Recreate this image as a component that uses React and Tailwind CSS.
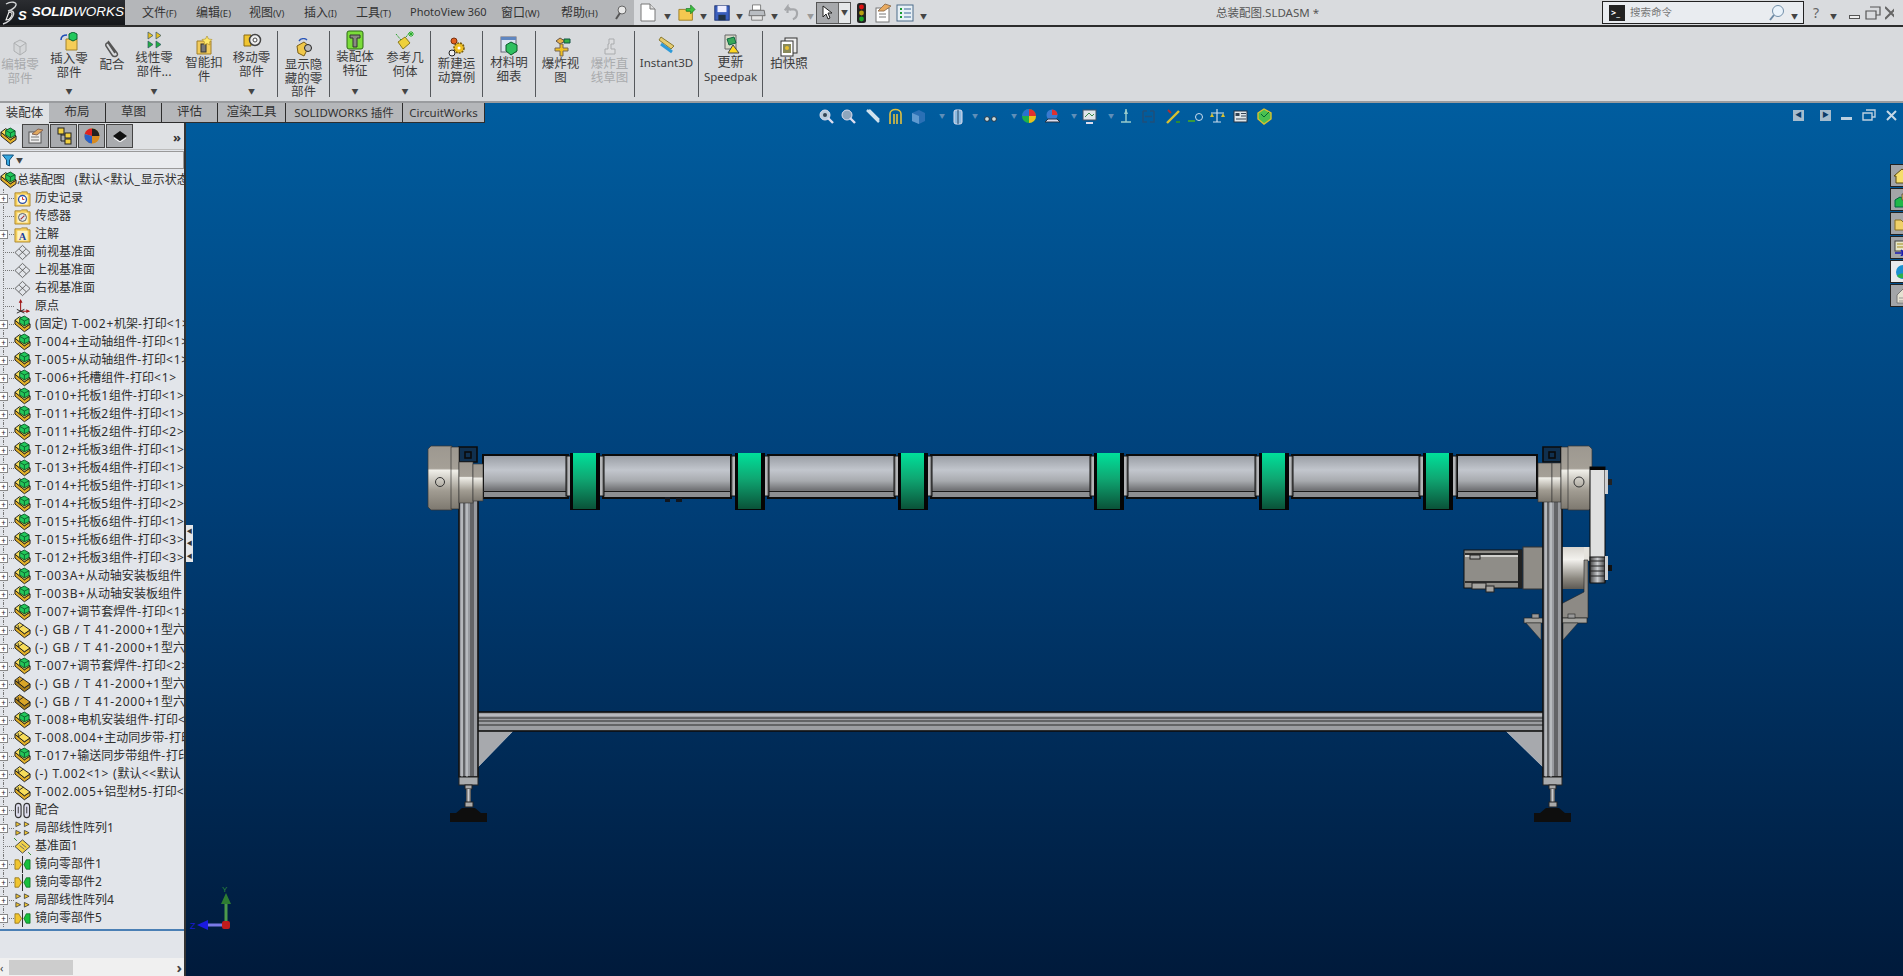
import React from 'react';

const font = "font-[family-name:'Noto_Sans','Noto_Sans_CJK_SC',sans-serif]";

// petits icones dessines a la main (18x18)
function PartIcon({ tone = 'asm' }) {
  const face = tone === 'dark' ? '#d9a528' : '#f6dc5a';
  const side = tone === 'dark' ? '#a97f1c' : '#e2b02a';
  return (
    <svg width="17" height="18" viewBox="0 0 18 18" className="shrink-0">
      <path d="M1 5 V9 L11 17.2 L17 13 V9 L11 13 Z" fill={side} stroke="#1d1d1d" strokeWidth="1" />
      <path d="M1 5 L6 1.2 L17 9 L11 13 Z" fill={face} stroke="#1d1d1d" strokeWidth="1" />
      {tone !== 'asm' && <path d="M4.5 7.8 L10 3.8 M4.5 7.8 V4" stroke="#1d1d1d" strokeWidth="0.9" fill="none" />}
      {tone === 'asm' && <path d="M6 3 L11 0.6 L16 3.6 V8.4 L11 11 L6 8 Z" fill="#22c85a" stroke="#084a24" strokeWidth="0.9" />}
      {tone === 'asm' && <path d="M6 3 L11 5.8 L16 3.6 M11 5.8 V11" fill="none" stroke="#084a24" strokeWidth="0.8" />}
    </svg>
  );
}

function TreeIcon({ type }) {
  if (type === 'asm') return <PartIcon tone="asm" />;
  if (type === 'part') return <PartIcon tone="part" />;
  if (type === 'dark') return <PartIcon tone="dark" />;
  const s = { width: 17, height: 17, viewBox: '0 0 18 18', className: 'shrink-0' };
  if (type === 'history' || type === 'sensor' || type === 'note')
    return (
      <svg {...s}>
        <path d="M1 3 H7 L8 2 H14 V4 H17 V17 H1 Z" fill="#f6cf5b" stroke="#a5812b" strokeWidth="0.9" />
        <rect x="3.5" y="5" width="11" height="10.5" fill="#fdf2c4" />
        {type === 'history' && <circle cx="9" cy="10" r="4.2" fill="#fff" stroke="#2b4ea8" strokeWidth="1.4" />}
        {type === 'history' && <path d="M9 7.5 V10 H11" stroke="#c22" fill="none" />}
        {type === 'sensor' && <circle cx="9" cy="10" r="4.2" fill="#dfe6ee" stroke="#555" strokeWidth="1" />}
        {type === 'sensor' && <path d="M7 12 L11 8" stroke="#a33" strokeWidth="1.2" />}
        {type === 'note' && <text x="5" y="14.5" fontSize="11" fontWeight="700" fill="#1c3fa0" fontFamily="Liberation Serif">A</text>}
      </svg>
    );
  if (type === 'plane')
    return (
      <svg {...s}>
        <path d="M9 1.5 L17 9 L9 16.5 L1 9 Z M5.5 5.5 L13 12.5 M12.5 5.5 L5 12.5" fill="none" stroke="#444" strokeWidth="0.8" />
      </svg>
    );
  if (type === 'plane1')
    return (
      <svg {...s}>
        <path d="M9 2 L17 9 L9 16 L1 9 Z" fill="#f3d34a" stroke="#333" strokeWidth="0.9" />
        <path d="M6 8 L11 12 M8 6 L13 10" stroke="#666" />
        <path d="M0 0 L3 3 M15 15 L18 18" stroke="#2a8a2a" />
      </svg>
    );
  if (type === 'origin')
    return (
      <svg {...s}>
        <path d="M7 14 V3 M7 14 H16" stroke="#a01818" strokeWidth="1.1" fill="none" />
        <path d="M7 1 L5 5 H9 Z M17 14 L13 12 V16 Z" fill="#a01818" />
        <path d="M3 12 L11 16 M3 16 L11 12" stroke="#222" />
      </svg>
    );
  if (type === 'mate')
    return (
      <svg {...s}>
        <rect x="1.5" y="1.5" width="6" height="15" rx="3" fill="#dde" stroke="#333" strokeWidth="1.2" />
        <rect x="10.5" y="1.5" width="6" height="15" rx="3" fill="#dde" stroke="#333" strokeWidth="1.2" />
        <path d="M4.5 5 V12 M13.5 5 V12" stroke="#333" />
      </svg>
    );
  if (type === 'pattern')
    return (
      <svg {...s}>
        {[[2, 2], [11, 2], [2, 11], [11, 11]].map(([x, y]) => (
          <path key={`${x}-${y}`} d={`M${x} ${y} L${x + 5} ${y + 2.5} L${x} ${y + 5} Z`} fill="#f0c530" stroke="#333" strokeWidth="0.8" />
        ))}
      </svg>
    );
  return (
    <svg {...s}>
      <path d="M1 4 H5 L8 9 L5 14 H1 Z" fill="#f0c530" stroke="#8a6a10" strokeWidth="0.8" />
      <path d="M9 0 V18" stroke="#222" strokeWidth="1" />
      <path d="M17 4 H13 L10.5 9 L13 14 H17 Z" fill="#18c03c" stroke="#0a6a20" strokeWidth="0.8" />
    </svg>
  );
}

function RibbonIcon({ name }) {
  const s = { width: 20, height: 20, viewBox: '0 0 20 20' };
  switch (name) {
    case 'edit':
      return (
        <svg {...s}>
          <path d="M4 5 L10 2 L16 5 L16 13 L10 17 L4 13 Z M4 5 L10 9 L16 5 M10 9 V17" fill="#d4d6d8" stroke="#aeb0b2" />
        </svg>
      );
    case 'insert':
      return (
        <svg {...s}>
          <path d="M7 7 H18 V18 H7 Z" fill="#f5cd58" stroke="#a2822c" />
          <path d="M10 2 L14 0 L18 2 V7 L14 9 L10 7 Z" fill="#22c85c" stroke="#0a6030" />
          <path d="M2 8 C2 4 5 3 8 3" fill="none" stroke="#1f4db5" strokeWidth="1.6" />
        </svg>
      );
    case 'mate':
      return (
        <svg {...s}>
          <path d="M6 3 L15 15 C17 18 12 20 10 17 L4 8 C3 5 6 4 7 6 L13 15" fill="none" stroke="#555" strokeWidth="1.5" />
        </svg>
      );
    case 'linear':
      return (
        <svg {...s}>
          {[[4, 1], [12, 1], [4, 10], [12, 10]].map(([x, y], i) => (
            <path key={i} d={`M${x} ${y} L${x + 5} ${y + 3.5} L${x} ${y + 7} Z`} fill={i < 2 ? '#e8c020' : '#20b040'} stroke="#356" strokeWidth="0.7" />
          ))}
        </svg>
      );
    case 'smart':
      return (
        <svg {...s}>
          <path d="M3 5 H17 V18 H3 Z" fill="#f2cc5c" stroke="#a07e2a" />
          <rect x="7" y="8" width="5" height="8" fill="#777" stroke="#333" />
          <path d="M13 0 L14.5 3 L18 3.5 L15.5 6 L16 9 L13 7.5 L10 9 L10.5 6 L8 3.5 L11.5 3 Z" fill="#ffe96a" stroke="#a98a20" strokeWidth="0.6" />
        </svg>
      );
    case 'move':
      return (
        <svg {...s}>
          <path d="M2 4 H9 V15 H2 Z" fill="#f0c530" stroke="#8a6a10" />
          <circle cx="13" cy="9" r="5.5" fill="#eee" stroke="#444" strokeWidth="1.5" />
          <circle cx="13" cy="9" r="2" fill="#fff" stroke="#444" />
        </svg>
      );
    case 'show':
      return (
        <svg {...s}>
          <path d="M3 8 L10 4 L15 8 L10 18 L4 15 Z" fill="#f0c84a" stroke="#7a5e18" />
          <circle cx="14" cy="10" r="3.5" fill="#bbb" stroke="#222" />
          <path d="M5 3 C7 0 11 0 13 2" stroke="#2a56b8" strokeWidth="1.4" fill="none" />
        </svg>
      );
    case 'feature':
      return (
        <svg {...s}>
          <rect x="2" y="1" width="16" height="18" rx="2" fill="#7bdc3a" stroke="#2c6a14" />
          <path d="M5 5 H15 V8 H12 V17 H8 V8 H5 Z" fill="#8a8a82" stroke="#333" />
        </svg>
      );
    case 'geometry':
      return (
        <svg {...s}>
          <path d="M3 11 L10 6 L15 12 L8 18 Z" fill="#eed13a" stroke="#8a7a20" />
          <path d="M1 3 L6 9 M11 6 L15 1" stroke="#2aa02a" strokeDasharray="2 1" />
          <path d="M16 0 V6 M13 3 H19 M14 1 L18 5 M18 1 L14 5" stroke="#28b028" />
        </svg>
      );
    case 'motion':
      return (
        <svg {...s}>
          <circle cx="12" cy="11" r="5" fill="#f0c020" stroke="#7a5e10" strokeDasharray="2 1" strokeWidth="1.6" />
          <circle cx="12" cy="11" r="1.5" fill="#fff" />
          <circle cx="5" cy="16" r="3" fill="#eee" stroke="#222" />
          <circle cx="7" cy="4" r="3" fill="#e06020" stroke="#7a3010" />
        </svg>
      );
    case 'bom':
      return (
        <svg {...s}>
          <rect x="2" y="1" width="15" height="15" fill="#dce4f0" stroke="#667" />
          <rect x="2" y="1" width="15" height="3" fill="#5f86c0" />
          <path d="M7 9 L12 6 L18 9 V15 L12 19 L7 15 Z" fill="#30c060" stroke="#0a5a28" />
        </svg>
      );
    case 'explode':
      return (
        <svg {...s}>
          <path d="M9 1 L14 4 L9 7 L5 4 Z" fill="#e8b048" stroke="#654" />
          <path d="M13 2 H19 V6 H13 Z" fill="#35b045" stroke="#154" />
          <path d="M4 11 H9 V7 H12 V11 H17 V14 H12 V19 H9 V14 H4 Z" fill="#f0c020" stroke="#765" />
        </svg>
      );
    case 'line':
      return (
        <svg {...s}>
          <path d="M9 2 H14 V7 H11 V12 H15 V17 H5 V12 H8 V7 H9 Z" fill="#dcdddf" stroke="#a9abad" />
        </svg>
      );
    case 'instant':
      return (
        <svg {...s}>
          <path d="M4 2 L17 11 L14 14 L2 5 Z" fill="#e6cc70" stroke="#8a7a30" />
          <path d="M4 9 L15 17" stroke="#2d9ad8" strokeWidth="3" />
        </svg>
      );
    case 'speedpak':
      return (
        <svg {...s}>
          <path d="M4 1 H15 V15 H4 Z" fill="#d8d8c8" stroke="#666" />
          <path d="M6 5 L13 3 L15 9 L8 11 Z" fill="#38a858" stroke="#164" />
          <path d="M12 11 L18 19 H7 Z" fill="#ffd820" stroke="#444" />
        </svg>
      );
    default:
      return (
        <svg {...s}>
          <rect x="6" y="1" width="12" height="15" fill="#eee" stroke="#333" />
          <rect x="2" y="4" width="12" height="15" fill="#fff" stroke="#333" />
          <rect x="4" y="7" width="8" height="9" fill="#8a8a5a" />
          <circle cx="8" cy="11" r="2" fill="#e8c030" />
        </svg>
      );
  }
}

const ribbon = [
  { w: 40, lines: ['编辑零', '部件'], icon: 'edit', off: true, pt: 'pt-[11px]' },
  { w: 58, lines: ['插入零', '部件'], icon: 'insert', caret: true, pt: 'pt-[5px]' },
  { w: 28, lines: ['配合'], icon: 'mate', pt: 'pt-[11px]' },
  { w: 56, lines: ['线性零', '部件...'], icon: 'linear', caret: true, pt: 'pt-[4px]' },
  { w: 44, lines: ['智能扣', '件'], icon: 'smart', pt: 'pt-[9px]' },
  { w: 51, lines: ['移动零', '部件'], icon: 'move', caret: true, pt: 'pt-[4px]' },
  'sep',
  { w: 51, lines: ['显示隐', '藏的零', '部件'], icon: 'show', pt: 'pt-[11px]' },
  'sep',
  { w: 50, lines: ['装配体', '特征'], icon: 'feature', caret: true, pt: 'pt-[3px]' },
  { w: 50, lines: ['参考几', '何体'], icon: 'geometry', caret: true, pt: 'pt-[4px]' },
  'sep',
  { w: 51, lines: ['新建运', '动算例'], icon: 'motion', pt: 'pt-[10px]' },
  'sep',
  { w: 52, lines: ['材料明', '细表'], icon: 'bom', pt: 'pt-[9px]' },
  'sep',
  { w: 49, lines: ['爆炸视', '图'], icon: 'explode', pt: 'pt-[10px]' },
  { w: 49, lines: ['爆炸直', '线草图'], icon: 'line', off: true, pt: 'pt-[10px]' },
  'sep',
  { w: 63, lines: ['Instant3D'], icon: 'instant', pt: 'pt-[8px]' },
  'sep',
  { w: 63, lines: ['更新', 'Speedpak'], icon: 'speedpak', pt: 'pt-[7px]' },
  'sep',
  { w: 52, lines: ['拍快照'], icon: 'snap', pt: 'pt-[10px]' },
];

const widthClass = {
  28: 'w-[28px]',
  40: 'w-[40px]',
  44: 'w-[44px]',
  49: 'w-[49px]',
  50: 'w-[50px]',
  51: 'w-[51px]',
  52: 'w-[52px]',
  56: 'w-[56px]',
  58: 'w-[58px]',
  63: 'w-[63px]',
};

const menus = [
  ['文件', '(F)', 'w-[54px]'],
  ['编辑', '(E)', 'w-[53px]'],
  ['视图', '(V)', 'w-[55px]'],
  ['插入', '(I)', 'w-[52px]'],
  ['工具', '(T)', 'w-[53px]'],
];

const tabs = [
  ['装配体', 'w-[49px]'],
  ['布局', 'w-[57px]'],
  ['草图', 'w-[56px]'],
  ['评估', 'w-[56px]'],
  ['渲染工具', 'w-[68px]'],
  ['SOLIDWORKS 插件', 'w-[117px]'],
  ['CircuitWorks', 'w-[82px]'],
];

const gb = '(-) GB / T 41-2000+1型六角头螺栓';
const tree = [
  ['history', '历史记录', 1],
  ['sensor', '传感器', 0],
  ['note', '注解', 1],
  ['plane', '前视基准面', 0],
  ['plane', '上视基准面', 0],
  ['plane', '右视基准面', 0],
  ['origin', '原点', 0],
  ['asm', '(固定) T-002+机架-打印<1>', 1],
  ['asm', 'T-004+主动轴组件-打印<1>', 1],
  ['asm', 'T-005+从动轴组件-打印<1>', 1],
  ['asm', 'T-006+托槽组件-打印<1>', 1],
  ['asm', 'T-010+托板1组件-打印<1>', 1],
  ['asm', 'T-011+托板2组件-打印<1>', 1],
  ['asm', 'T-011+托板2组件-打印<2>', 1],
  ['asm', 'T-012+托板3组件-打印<1>', 1],
  ['asm', 'T-013+托板4组件-打印<1>', 1],
  ['asm', 'T-014+托板5组件-打印<1>', 1],
  ['asm', 'T-014+托板5组件-打印<2>', 1],
  ['asm', 'T-015+托板6组件-打印<1>', 1],
  ['asm', 'T-015+托板6组件-打印<3>', 1],
  ['asm', 'T-012+托板3组件-打印<3>', 1],
  ['asm', 'T-003A+从动轴安装板组件', 1],
  ['asm', 'T-003B+从动轴安装板组件', 1],
  ['asm', 'T-007+调节套焊件-打印<1>', 1],
  ['part', gb, 1],
  ['part', gb, 1],
  ['asm', 'T-007+调节套焊件-打印<2>', 1],
  ['dark', gb, 1],
  ['dark', gb, 1],
  ['asm', 'T-008+电机安装组件-打印<1>', 1],
  ['part', 'T-008.004+主动同步带-打印', 1],
  ['asm', 'T-017+输送同步带组件-打印', 1],
  ['part', '(-) T.002<1> (默认<<默认', 1],
  ['part', 'T-002.005+铝型材5-打印<1>', 1],
  ['mate', '配合', 1],
  ['pattern', '局部线性阵列1', 1],
  ['plane1', '基准面1', 0],
  ['mirror', '镜向零部件1', 1],
  ['mirror', '镜向零部件2', 1],
  ['pattern', '局部线性阵列4', 1],
  ['mirror', '镜向零部件5', 1],
];

function Caret({ tone = 'text-[#444]' }) {
  return <span className={`text-[7px] leading-none ${tone}`}>▼</span>;
}

// le latin est plus espace que le chinois dans l'arbre
function Label({ text }) {
  return text.split(/([\u4e00-\u9fff]+)/).map((part, i) =>
    /[\u4e00-\u9fff]/.test(part) ? (
      <span key={i}>{part}</span>
    ) : (
      <span key={i} className="tracking-[0.8px]">{part}</span>
    )
  );
}

function TopBar() {
  return (
    <div className="h-[27px] flex border-b-2 border-[#2c2c2c] bg-[#d9dbde] shrink-0 text-[#333]">
      <div className="w-[125px] flex items-center pl-[2px] bg-gradient-to-b from-[#2b2d31] to-[#15171a] text-white">
        <svg width="20" height="24" viewBox="0 0 20 24" className="shrink-0">
          <path d="M4 3 C9 0 15 1 14 4 C13 7 9 9 6 10 C10 9 13 11 11 15 C9 19 4 22 1 23" fill="none" stroke="#d4d6d8" strokeWidth="1.4" />
          <path d="M7 11 C10 11 11 13 9 16 C8 18 6 19 4 19 L7 11" fill="none" stroke="#f0f0f0" strokeWidth="1.1" />
        </svg>
        <span className="text-[13px] leading-none italic font-bold -ml-[4px] mt-[5px] font-[family-name:'Liberation_Sans',sans-serif]">S</span>
        <span className="text-[13.5px] italic ml-[5px] font-[family-name:'Liberation_Sans',sans-serif]">
          <b>SOLID</b>WORKS
        </span>
      </div>
      <div className="w-[509px] flex items-center pl-[17px] bg-[#b4b6b9] text-[12px] whitespace-nowrap">
        {menus.map(([t, k, w]) => (
          <span key={t} className={w}>
            {t}
            <span className="text-[9.5px]">{k}</span>
          </span>
        ))}
        <span className="w-[92px] pl-[1px] text-[11px]">PhotoView 360</span>
        <span className="w-[60px]">
          窗口<span className="text-[9.5px]">(W)</span>
        </span>
        <span className="w-[56px]">
          帮助<span className="text-[9.5px]">(H)</span>
        </span>
        <svg width="14" height="16" viewBox="0 0 14 16" className="-ml-[3px]">
          <circle cx="8" cy="5" r="4" fill="#e8e8e8" stroke="#666" />
          <path d="M6 8 L2 14" stroke="#555" strokeWidth="2" />
        </svg>
      </div>
      <div className="flex-1 flex items-center pl-[6px]">
        <svg width="16" height="19" viewBox="0 0 16 19">
          <path d="M1 1 H10 L15 6 V18 H1 Z" fill="#fff" stroke="#777" />
          <path d="M10 1 V6 H15" fill="#ddd" stroke="#777" />
        </svg>
        <span className="w-[22px] pl-[8px]"><Caret /></span>
        <svg width="18" height="18" viewBox="0 0 20 20">
          <path d="M1 6 H8 L10 8 H16 V18 H1 Z" fill="#f5c850" stroke="#9a7a20" />
          <path d="M9 5 H14 V1 L19 6 L14 11 V8 H9 Z" fill="#3ac040" stroke="#16701c" strokeWidth="0.7" />
        </svg>
        <span className="w-[17px] pl-[4px]"><Caret /></span>
        <svg width="18" height="18" viewBox="0 0 20 20">
          <rect x="2" y="2" width="16" height="16" fill="#3a5fbe" stroke="#1a2f70" />
          <rect x="5" y="2" width="10" height="7" fill="#eef" />
          <rect x="6" y="12" width="8" height="6" fill="#234" />
        </svg>
        <span className="w-[17px] pl-[5px]"><Caret /></span>
        <svg width="18" height="18" viewBox="0 0 20 20">
          <path d="M5 1 H14 V7 H5 Z" fill="#fff" stroke="#777" />
          <path d="M2 7 H18 L19 13 H1 Z" fill="#b9bdc2" stroke="#666" />
          <path d="M4 13 H16 V18 H4 Z" fill="#e5e5e5" stroke="#777" />
        </svg>
        <span className="w-[17px] pl-[5px]"><Caret /></span>
        <svg width="18" height="18" viewBox="0 0 20 20">
          <path d="M5 10 V3 L2 7 M5 3 L9 7 M5 6 H12 C17 6 17 15 11 17" fill="none" stroke="#a6a8ab" strokeWidth="2.4" />
        </svg>
        <span className="w-[15px] pl-[6px]"><Caret tone="text-[#999]" /></span>
        <div className="w-[35px] h-[22px] flex border border-[#555]">
          <span className="w-[22px] bg-[#a7a9ac] flex items-center justify-center border-r border-[#666]">
            <svg width="11" height="15" viewBox="0 0 11 15">
              <path d="M1 1 V12 L4 9 L6 14 L8 13 L6 8 H10 Z" fill="#fff" stroke="#222" />
            </svg>
          </span>
          <span className="flex-1 bg-[#e6e8ea] flex items-center justify-center"><Caret /></span>
        </div>
        <svg width="11" height="20" viewBox="0 0 11 20" className="ml-[5px]">
          <rect x="1" y="0" width="9" height="20" rx="2.5" fill="#222" />
          <circle cx="5.5" cy="4" r="2.4" fill="#d11" />
          <circle cx="5.5" cy="10" r="2.4" fill="#b8a010" />
          <circle cx="5.5" cy="16" r="2.4" fill="#1aa82a" />
        </svg>
        <svg width="18" height="20" viewBox="0 0 18 20" className="ml-[7px]">
          <rect x="2" y="5" width="13" height="14" fill="#fff" stroke="#777" />
          <path d="M4 8 L11 1 L17 3 L10 8 Z" fill="#e8aa60" stroke="#975" />
          <path d="M5 11 H12 M5 14 H12" stroke="#777" />
        </svg>
        <svg width="18" height="18" viewBox="0 0 18 18" className="ml-[4px]">
          <rect x="1" y="1" width="16" height="16" fill="#e8f0f6" stroke="#4c6c8a" />
          <path d="M4 5 H6 M4 9 H6 M4 13 H6" stroke="#1a9a30" strokeWidth="2" />
          <path d="M8 5 H15 M8 9 H15 M8 13 H15" stroke="#3f6a9a" />
        </svg>
        <span className="pl-[6px] w-[302px]"><Caret /></span>
        <span className="text-[11.5px] w-[386px] text-[#555] whitespace-nowrap">总装配图.SLDASM *</span>
        <div className="w-[202px] h-[23px] border border-[#222] bg-[#e9ecf0] flex items-center pl-[6px]">
          <span className="w-[16px] h-[16px] bg-[#222] text-white text-[9px] leading-[15px] pl-[2px] font-bold">&gt;_</span>
          <span className="ml-[5px] text-[10.5px] text-[#777] flex-1">搜索命令</span>
          <svg width="18" height="18" viewBox="0 0 18 18">
            <circle cx="10" cy="7" r="5.5" fill="#eaf3fb" stroke="#7390aa" />
            <path d="M6 11 L2 16" stroke="#6c8aa6" strokeWidth="2" />
          </svg>
          <span className="px-[5px]"><Caret /></span>
        </div>
        <span className="ml-[9px] text-[14px] text-[#666] w-[17px]">?</span>
        <span className="w-[14px]"><Caret /></span>
        <span className="w-[21px] flex justify-center">
          <span className="w-[11px] h-[4px] mt-[8px] border border-[#555] bg-[#eee]" />
        </span>
        <svg width="16" height="14" viewBox="0 0 16 14" className="shrink-0">
          <path d="M5 1 H15 V9 H11 M1 5 H11 V13 H1 Z" fill="none" stroke="#555" strokeWidth="1.2" />
        </svg>
        <svg width="9" height="14" viewBox="0 0 9 14" className="ml-[4px] shrink-0">
          <path d="M0 1 L12 13 M12 1 L0 13" stroke="#666" strokeWidth="2" />
        </svg>
      </div>
    </div>
  );
}

function Ribbon() {
  return (
    <div className="h-[76px] flex shrink-0 bg-[#d8dadd] border-b-2 border-[#9a9c9f] overflow-hidden">
      {ribbon.map((it, i) =>
        it === 'sep' ? (
          <div key={i} className="w-[1px] h-[66px] mt-[4px] bg-[#55585c] shrink-0" />
        ) : (
          <div
            key={i}
            className={`${widthClass[it.w]} ${it.pt} shrink-0 relative flex flex-col items-center text-center text-[12.5px] leading-[13.5px] ${
              it.off ? 'text-[#a9abad]' : 'text-[#3d3d3d]'
            }`}
          >
            <RibbonIcon name={it.icon} />
            <div className={it.lines[0] === 'Instant3D' || it.lines[1] === 'Speedpak' ? 'text-[11.5px] leading-[15px]' : ''}>
              {it.lines.map((l) => (
                <div key={l} className={l === '更新' ? 'text-[13px]' : ''}>{l}</div>
              ))}
            </div>
            {it.caret && (
              <span className="absolute left-0 right-0 top-[56px]">
                <Caret />
              </span>
            )}
          </div>
        )
      )}
    </div>
  );
}

function TabStrip() {
  return (
    <div className="absolute left-0 top-0 h-[20px] flex text-[12.5px] text-[#333] z-10">
      {tabs.map(([t, w], i) => (
        <div
          key={t}
          className={`${w} flex items-center justify-center whitespace-nowrap ${
            i === 0 ? 'bg-[#dfe1e4]' : 'bg-[#b5b7ba] border-r border-b border-[#2d2d2d]'
          } ${t.includes('SOLID') || t === 'CircuitWorks' ? 'text-[11.5px]' : ''}`}
        >
          {t}
        </div>
      ))}
    </div>
  );
}

function TreeRow({ type, label, plus }) {
  return (
    <div className="h-[18px] flex items-center">
      <div className="relative w-[14px] h-full shrink-0">
        <span className="absolute left-[3px] inset-y-0 border-l border-dotted border-[#777]" />
        <span className="absolute left-[3px] top-[9px] w-[11px] border-t border-dotted border-[#777]" />
        {plus === 1 && (
          <span className="absolute left-[-1px] top-[5px] w-[9px] h-[9px] bg-white border border-[#888] flex items-center justify-center text-[8px] leading-none text-[#222]">
            +
          </span>
        )}
      </div>
      <TreeIcon type={type} />
      <span className="ml-[4px] whitespace-nowrap text-[#2f2f2f]">
        <Label text={label} />
      </span>
    </div>
  );
}

function Sidebar() {
  return (
    <div className="w-[186px] shrink-0 flex flex-col bg-[#e2e5ea] border-r-2 border-[#333] pt-[20px] overflow-hidden">
      <div className="h-[27px] flex items-end gap-[1px] border-b border-[#bbb] bg-[#dfe1e4] pb-[1px]">
        <div className="w-[21px] h-[24px] flex items-center overflow-hidden bg-[#e2e5ea]">
          <PartIcon tone="asm" />
        </div>
        <div className="w-[27px] h-[24px] bg-[#a9abae] border border-[#444] flex items-center justify-center">
          <svg width="16" height="16" viewBox="0 0 16 16">
            <rect x="1" y="4" width="12" height="11" fill="#eee" stroke="#555" />
            <path d="M4 6 L10 1 L15 2 L9 7 Z" fill="#e0a860" stroke="#865" />
            <path d="M3 9 H11 M3 12 H11" stroke="#777" />
          </svg>
        </div>
        <div className="w-[27px] h-[24px] bg-[#a9abae] border border-[#444] flex items-center justify-center">
          <svg width="16" height="18" viewBox="0 0 16 18">
            <rect x="2" y="1" width="6" height="6" fill="#f2d040" stroke="#222" />
            <rect x="9" y="6" width="6" height="5" fill="#f2d040" stroke="#222" />
            <rect x="9" y="12" width="6" height="5" fill="#f2d040" stroke="#222" />
            <path d="M5 7 V14 H9 M5 8 H9" fill="none" stroke="#222" />
          </svg>
        </div>
        <div className="w-[27px] h-[24px] bg-[#a9abae] border border-[#444] flex items-center justify-center">
          <svg width="16" height="16" viewBox="0 0 16 16">
            <circle cx="8" cy="8" r="7.5" fill="#e8b020" />
            <path d="M8 8 L8 0.5 A7.5 7.5 0 0 0 0.7 6 Z" fill="#d22" />
            <path d="M8 8 L8 0.5 A7.5 7.5 0 0 1 15.5 8 Z" fill="#222" />
            <path d="M8 8 L15.5 8 A7.5 7.5 0 0 1 8 15.5 Z" fill="#d88a20" />
            <path d="M8 8 L8 15.5 A7.5 7.5 0 0 1 0.7 6 Z" fill="#2a60c8" />
          </svg>
        </div>
        <div className="w-[27px] h-[24px] bg-[#a9abae] border border-[#444] flex items-center justify-center">
          <svg width="16" height="12" viewBox="0 0 16 12">
            <path d="M1 6 L8 1 L15 6 L8 11 Z" fill="#111" />
            <path d="M2 8 L8 12 L14 8" stroke="#fff" fill="none" />
          </svg>
        </div>
        <span className="ml-auto mr-[3px] mb-[4px] text-[13px] leading-none text-[#333] font-bold">»</span>
      </div>
      <div className="h-[18px] mt-[1px] mx-[0px] bg-[#e9ebee] border border-[#999] flex items-center pl-[1px] gap-[2px]">
        <svg width="12" height="13" viewBox="0 0 12 13">
          <path d="M0.5 1 H11.5 L7.5 6 V12 L4.5 10.5 V6 Z" fill="#35a8e0" stroke="#14507a" />
        </svg>
        <Caret />
      </div>
      <div className={`flex-1 flex flex-col min-h-0 text-[12px] leading-[18px] ${font} pt-[2px]`}>
        <div className="h-[18px] flex items-center whitespace-nowrap text-[#2f2f2f]">
          <PartIcon tone="asm" />
          <span className="ml-[0px]">
            总装配图&nbsp;&nbsp;&nbsp;
            <Label text="(默认<默认_显示状态-1>)" />
          </span>
        </div>
        {tree.map(([type, label, plus], i) => (
          <TreeRow key={i} type={type} label={label} plus={plus} />
        ))}
        <div className="h-[2px] mt-[2px] bg-[#4a7fb5] shrink-0" />
        <div className="flex-1" />
        <div className="h-[18px] bg-[#f0f0f0] flex items-center shrink-0 relative">
          <span className="w-[9px] text-[11px] leading-none text-[#444]">‹</span>
          <span className="w-[64px] h-[15px] bg-[#cdcdcd]" />
          <span className="ml-auto mr-[2px] text-[15px] leading-none text-[#444] font-bold">›</span>
        </div>
      </div>
    </div>
  );
}

function Roller({ x, w }) {
  return (
    <g>
      <rect x={x} y="455" width={w} height="43" fill="url(#roller)" stroke="#0b0b0b" strokeWidth="2" />
      <path d={`M${x} 491.5 H${x + w}`} stroke="#1a1a1a" strokeWidth="1" />
    </g>
  );
}

function Band({ x }) {
  return (
    <g>
      <rect x={x - 3} y="456" width="6" height="40" fill="url(#hub)" stroke="#111" />
      <rect x={x + 29} y="456" width="6" height="40" fill="url(#hub)" stroke="#111" />
      <rect x={x + 1} y="453" width="30" height="57" fill="#050505" />
      <rect x={x + 4} y="453" width="23" height="56" fill="url(#green)" />
    </g>
  );
}

function Column({ x }) {
  return (
    <g>
      <rect x={x} y="500" width="19" height="277" fill="#999ba0" stroke="#111" strokeWidth="1.6" />
      <path d={`M${x + 5} 500 V777 M${x + 12} 500 V777 M${x + 14} 500 V777`} stroke="#222" strokeWidth="0.9" />
      <path d={`M${x + 3} 500 V777`} stroke="#c2c4c8" strokeWidth="1.4" />
      <path d={`M${x + 8} 500 V777`} stroke="#b8bbbf" strokeWidth="2" />
      <rect x={x} y="777" width="19" height="8" fill="#a9abad" stroke="#222" />
      <rect x={x + 6} y="785" width="7" height="4" fill="#aaa" stroke="#222" />
      <rect x={x + 7} y="789" width="5" height="17" fill="url(#hub)" />
      <rect x={x + 6} y="802" width="8" height="5" fill="#aaa" stroke="#222" />
      <path d={`M${x + 3} 808 H${x + 16} L${x + 22} 813 L${x + 28} 813 V822 H${x - 9} V813 H${x - 3} Z`} fill="#0e0e0e" />
    </g>
  );
}

function Model() {
  const greens = [569, 734, 897, 1093, 1258, 1422];
  const rollers = [
    [483, 85],
    [603, 128],
    [768, 127],
    [931, 160],
    [1127, 129],
    [1292, 128],
    [1457, 80],
  ];
  return (
    <svg viewBox="186 103 1717 873" className="absolute inset-0 w-full h-full">
      <defs>
        <linearGradient id="roller" x1="0" y1="0" x2="0" y2="1">
          <stop offset="0" stopColor="#989ca3" />
          <stop offset="0.35" stopColor="#c2c6cd" />
          <stop offset="0.6" stopColor="#a8abaf" />
          <stop offset="0.82" stopColor="#6f7073" />
          <stop offset="0.85" stopColor="#8d8f92" />
          <stop offset="1" stopColor="#8d8f92" />
        </linearGradient>
        <linearGradient id="green" x1="0" y1="0" x2="0" y2="1">
          <stop offset="0" stopColor="#00e09a" />
          <stop offset="0.45" stopColor="#0fa873" />
          <stop offset="1" stopColor="#0a5238" />
        </linearGradient>
        <linearGradient id="hub" x1="0" y1="0" x2="1" y2="0">
          <stop offset="0" stopColor="#444" />
          <stop offset="0.5" stopColor="#c9cbce" />
          <stop offset="1" stopColor="#444" />
        </linearGradient>
        <linearGradient id="flange" x1="0" y1="0" x2="0" y2="1">
          <stop offset="0" stopColor="#9d9890" />
          <stop offset="0.35" stopColor="#a5a097" />
          <stop offset="0.38" stopColor="#f0efe9" />
          <stop offset="0.7" stopColor="#a19c92" />
          <stop offset="1" stopColor="#7d786f" />
        </linearGradient>
        <linearGradient id="motorcyl" x1="0" y1="0" x2="0" y2="1">
          <stop offset="0" stopColor="#d8d5cf" />
          <stop offset="0.3" stopColor="#f3f2ee" />
          <stop offset="0.75" stopColor="#8c8880" />
          <stop offset="1" stopColor="#5d5a54" />
        </linearGradient>
      </defs>

      {/* poutre basse */}
      <path d="M478 731 H513 L478 767 Z" fill="#a7a9ad" stroke="#d8dadd" strokeWidth="0.6" />
      <path d="M1543 731 H1506 L1543 767 Z" fill="#a7a9ad" stroke="#d8dadd" strokeWidth="0.6" />
      <rect x="476" y="712" width="1068" height="19" fill="#9c9ea2" stroke="#0e0e0e" strokeWidth="1.6" />
      <path d="M476 718 H1544 M476 721 H1544 M476 725 H1544" stroke="#1d1d1d" strokeWidth="0.9" />
      <path d="M476 715 H1544" stroke="#b7b9bd" strokeWidth="2" />
      <Column x={459} />

      {/* rouleaux */}
      {rollers.map(([x, w]) => (
        <Roller key={x} x={x} w={w} />
      ))}
      {greens.map((x) => (
        <Band key={x} x={x} />
      ))}
      <path d="M665 497 h5 v5 h-5 z M676 498 h6 v4 h-6 z" fill="#10161f" />

      {/* extremite gauche */}
      <path d="M459 447 H477 V462 H459 Z" fill="#10304f" stroke="#0b0b0b" strokeWidth="1.6" />
      <rect x="465" y="452" width="6" height="6" fill="none" stroke="#0b0b0b" strokeWidth="1.6" />
      <path d="M431 446 H452 V510 H431 L428 507 V449 Z" fill="url(#flange)" stroke="#333" strokeWidth="0.7" />
      <circle cx="440" cy="482" r="4.5" fill="none" stroke="#333" />
      <rect x="451" y="447" width="8" height="62" fill="url(#flange)" stroke="#222" strokeWidth="0.6" />
      <rect x="459" y="462" width="14" height="41" fill="url(#flange)" stroke="#333" strokeWidth="0.6" />
      <rect x="473" y="464" width="10" height="37" fill="url(#flange)" stroke="#333" strokeWidth="0.6" />

      {/* moteur */}
      <rect x="1464" y="550" width="58" height="38" fill="#8f8d88" stroke="#111" />
      <path d="M1465 554 H1518 M1465 582 H1518" stroke="#111" strokeWidth="1.4" />
      <path d="M1465 556 H1518" stroke="#e8e8e6" strokeWidth="1.6" />
      <rect x="1470" y="555" width="10" height="4" fill="#aaa" stroke="#222" />
      <rect x="1472" y="583" width="14" height="6" fill="#a5a39f" stroke="#222" />
      <rect x="1486" y="586" width="8" height="6" fill="#a5a39f" stroke="#222" />
      <rect x="1518" y="550" width="4" height="38" fill="#222" />
      <rect x="1523" y="547" width="20" height="42" fill="#908d87" stroke="#333" />
      <rect x="1560" y="547" width="24" height="42" fill="url(#motorcyl)" />
      <rect x="1584" y="547" width="6" height="14" fill="#e5e3dd" />
      <path d="M1561 604 L1584 592 V560 L1588 560 V618 H1561 Z" fill="#8d8a85" stroke="#222" strokeWidth="0.6" />
      <rect x="1524" y="618" width="63" height="5" fill="#a4a39f" stroke="#222" strokeWidth="0.7" />
      <path d="M1526 623 H1541 V640 Z" fill="#8f8e8b" stroke="#222" strokeWidth="0.5" />
      <path d="M1563 623 H1578 L1563 640 Z" fill="#8f8e8b" stroke="#222" strokeWidth="0.5" />
      <rect x="1532" y="614" width="7" height="4" fill="#999" stroke="#222" strokeWidth="0.6" />
      <rect x="1568" y="614" width="7" height="4" fill="#999" stroke="#222" strokeWidth="0.6" />
      <Column x={1543} />

      {/* extremite droite */}
      <path d="M1543 447 H1561 V462 H1543 Z" fill="#10304f" stroke="#0b0b0b" strokeWidth="1.6" />
      <rect x="1549" y="452" width="6" height="6" fill="none" stroke="#0b0b0b" strokeWidth="1.6" />
      <rect x="1538" y="463" width="14" height="39" fill="url(#flange)" stroke="#333" strokeWidth="0.6" />
      <rect x="1552" y="463" width="9" height="39" fill="url(#flange)" stroke="#333" strokeWidth="0.6" />
      <rect x="1561" y="447" width="8" height="62" fill="url(#flange)" stroke="#222" strokeWidth="0.6" />
      <path d="M1568 446 H1589 L1592 449 V507 L1589 510 H1568 Z" fill="url(#flange)" stroke="#333" strokeWidth="0.7" />
      <circle cx="1579" cy="482" r="5" fill="none" stroke="#333" />
      <rect x="1590" y="467" width="15" height="115" fill="#dfe0e0" stroke="#0a0a0a" strokeWidth="1" />
      <rect x="1590" y="467" width="15" height="3" fill="#050505" />
      <rect x="1590" y="557" width="15" height="26" fill="url(#hub)" stroke="#111" />
      <path d="M1590 561 H1605 M1590 566 H1605 M1590 571 H1605 M1590 576 H1605" stroke="#222" />
      <rect x="1605" y="470" width="3" height="24" fill="#cfd0d2" />
      <rect x="1605" y="556" width="3" height="24" fill="#cfd0d2" />
      <rect x="1608" y="479" width="4" height="6" fill="#222" />
      <rect x="1608" y="565" width="4" height="6" fill="#111" />

      {/* triedre */}
      <path d="M226 923 V897" stroke="#4c9a4c" strokeWidth="3" />
      <path d="M226 893 L221 904 H231 Z" fill="#2e7d32" />
      <text x="222" y="892" fontSize="8" fill="#2e8a3a" fontFamily="Liberation Sans">Y</text>
      <path d="M226 925 H202" stroke="#7a7ae8" strokeWidth="3" />
      <path d="M197 925 L208 920 V930 Z" fill="#1a1ae0" />
      <text x="190" y="929" fontSize="9" fill="#1a1ad0" fontFamily="Liberation Sans">Z</text>
      <rect x="222" y="921" width="8" height="8" rx="2" fill="#c01c1c" />
    </svg>
  );
}

function HudIcon({ name }) {
  const s = { width: 17, height: 17, viewBox: '0 0 17 17', className: 'shrink-0' };
  const m = {
    zoom: <><circle cx="7" cy="7" r="5" fill="#bcd" stroke="#dde" /><path d="M10 10 L15 15" stroke="#dde" strokeWidth="2.4" /><circle cx="7" cy="7" r="2" fill="#345" /></>,
    zoom2: <><circle cx="7" cy="7" r="5" fill="#8fa6bd" stroke="#dde" /><path d="M10 10 L15 15" stroke="#dde" strokeWidth="2.4" /></>,
    pen: <path d="M2 2 L14 14 M4 2 L14 12" stroke="#cfe2ee" strokeWidth="2.5" />,
    arch: <path d="M3 16 V6 C3 0 14 0 14 6 V16 M7 16 V6 M10 16 V6" fill="none" stroke="#e0c040" strokeWidth="1.6" />,
    cube: <><path d="M2 5 L9 2 L15 5 V13 L9 16 L2 13 Z" fill="#2a70b5" /><path d="M2 5 L9 8 V16 L2 13 Z" fill="#5f9ad0" /></>,
    tube: <><rect x="5" y="2" width="8" height="14" rx="2" fill="#8dbbe0" stroke="#dde" /><path d="M9 2 V16" stroke="#246" /></>,
    dots: <><circle cx="5" cy="11" r="2.4" fill="#cdd" stroke="#234" /><circle cx="12" cy="11" r="2.4" fill="#cdd" stroke="#234" /></>,
    ball: <><circle cx="8" cy="8" r="7" fill="#1eb04a" /><path d="M8 8 V1 A7 7 0 0 1 15 8 Z" fill="#e03030" /><path d="M8 8 H15 A7 7 0 0 1 8 15 Z" fill="#e8c020" /><path d="M8 8 V1 A7 7 0 0 0 1 8 Z" fill="#2a70d0" /></>,
    ball2: <><circle cx="8" cy="7" r="5.5" fill="#3a7ad0" /><path d="M8 7 V1.5 A5.5 5.5 0 0 1 13.5 7 Z" fill="#e03030" /><path d="M1 14 H16 L13 11 H4 Z" fill="#dde" stroke="#234" /></>,
    screen: <><rect x="2" y="2" width="13" height="10" fill="#dfe6ea" stroke="#456" /><path d="M4 9 L8 5 L11 8 L13 6" stroke="#3a8a4a" fill="none" /><path d="M5 15 H12" stroke="#dde" strokeWidth="2" /></>,
    axis: <><path d="M8 1 V14 M3 14 H13" stroke="#9cc" strokeWidth="1.4" /><path d="M8 1 L6 6 H10 Z" fill="#9cc" /></>,
    bracket: <path d="M3 3 H7 M3 3 V14 H7 M14 3 H10 M14 3 V14 H10 M5 8.5 H12" fill="none" stroke="#1f4f7a" strokeWidth="1.5" />,
    diag: <><path d="M2 15 L14 3" stroke="#d8c030" strokeWidth="2.4" /><path d="M3 2 L6 5" stroke="#b03030" strokeWidth="2" /><path d="M11 14 L15 14" stroke="#2a8a3a" strokeWidth="2" /></>,
    angle: <><path d="M1 13 H8" stroke="#3a9a3a" strokeWidth="2" /><circle cx="12" cy="9" r="3.5" fill="none" stroke="#cde" /></>,
    scale: <><path d="M8 1 V14 M2 5 H15 M4 14 H12" stroke="#cde" strokeWidth="1.2" /><path d="M1 9 L3 5 L5 9 Z M12 9 L14 5 L16 9 Z" fill="#d8c030" /></>,
    grid: <><rect x="2" y="3" width="13" height="11" fill="#dfe6ea" stroke="#234" /><rect x="3.5" y="5" width="4" height="3" fill="#345" /><path d="M9 5.5 H14 M9 8 H14 M4 11 H14" stroke="#345" /></>,
    green: <><path d="M2 5 L8 1 L15 5 V11 L8 16 L2 11 Z" fill="#4ac050" stroke="#d8c030" strokeWidth="1.4" /><path d="M5 6 L8 9 L13 4" fill="none" stroke="#063" /></>,
  };
  return <svg {...s}>{m[name]}</svg>;
}

function PaneIcon({ i }) {
  const s = { width: 16, height: 16, viewBox: '0 0 16 16', className: 'shrink-0' };
  if (i === 0) return <svg {...s}><path d="M0 8 L8 1 L16 8 H14 V15 H2 V8 Z" fill="#f6de6a" stroke="#5a4a10" /></svg>;
  if (i === 1) return <svg {...s}><path d="M1 8 L6 5 L12 8 V15 H1 Z" fill="#20b848" stroke="#064" /><path d="M8 2 H15 V8 H8 Z" fill="#f2d050" stroke="#654" /></svg>;
  if (i === 2) return <svg {...s}><path d="M1 4 H7 L9 6 H16 V14 H1 Z" fill="#f0d068" stroke="#8a7020" /></svg>;
  if (i === 3) return <svg {...s}><rect x="1" y="1" width="13" height="10" fill="#e6e6c8" stroke="#444" /><path d="M3 4 H12 M3 7 H12" stroke="#a58a20" /><path d="M1 13 H10 M7 10 L10 13 L7 16" stroke="#1a1ab0" strokeWidth="1.6" fill="none" /></svg>;
  if (i === 4) return <svg {...s}><circle cx="9" cy="8" r="7" fill="#1b8fd0" /><path d="M3 12 C6 8 12 10 15 10 C14 14 6 16 3 12 Z" fill="#2fb04a" /></svg>;
  return <svg {...s}><path d="M3 7 L9 1 L15 7 V15 H3 Z" fill="#e6e2d2" stroke="#777" /><path d="M5 10 H14 M5 13 H14" stroke="#999" /></svg>;
}

function Viewport() {
  const hud = [
    ['zoom', 'w-[22px]'], ['zoom2', 'w-[25px]'], ['pen', 'w-[22px]'], ['arch', 'w-[23px]'], ['cube', 'w-[25px]'], 'c',
    ['tube', 'w-[19px]'], 'c', ['dots', 'w-[25px]'], 'c',
    ['ball', 'w-[23px]'], ['ball2', 'w-[23px]'], 'c', ['screen', 'w-[23px]'], 'c',
    ['axis', 'w-[22px]'], ['bracket', 'w-[25px]'], ['diag', 'w-[22px]'], ['angle', 'w-[22px]'], ['scale', 'w-[23px]'], ['grid', 'w-[24px]'], ['green', 'w-[17px]'],
  ];
  const panes = [
    'bg-[#a3a5a8]', 'bg-[#a3a5a8]', 'bg-[#a3a5a8]', 'bg-[#a3a5a8]', 'bg-[#e8eaec]', 'bg-[#a3a5a8]',
  ];
  return (
    <div className="flex-1 relative overflow-hidden bg-gradient-to-b from-[#005d9f] via-[#003f78] via-45% to-[#001a3b]">
      <Model />
      <div className="absolute left-[632px] top-[4px] flex items-center h-[18px] z-10">
        {hud.map((h, i) =>
          h === 'c' ? (
            <span key={i} className="w-[14px] text-center text-[6px] text-[#5f8fb8]">▼</span>
          ) : (
            <span key={i} className={h[1]}><HudIcon name={h[0]} /></span>
          )
        )}
      </div>
      <div className="absolute right-[6px] top-[6px] flex items-center gap-[10px] text-[#bcd0e0]">
        <span className="w-[11px] h-[11px] bg-[#a6bccd] flex items-center justify-center text-[7px] text-[#0b3c68]">◀</span>
        <span className="w-[11px] h-[11px] bg-[#a6bccd] ml-[6px] flex items-center justify-center text-[7px] text-[#0b3c68]">▶</span>
        <span className="w-[11px] h-[3px] mt-[7px] bg-[#bcd0e0]" />
        <svg width="14" height="12" viewBox="0 0 14 12">
          <path d="M4 1 H13 V8 H10 M1 4 H10 V11 H1 Z" fill="none" stroke="#bcd0e0" strokeWidth="1.4" />
        </svg>
        <svg width="11" height="11" viewBox="0 0 11 11">
          <path d="M1 1 L10 10 M10 1 L1 10" stroke="#c6d8e6" strokeWidth="2" />
        </svg>
      </div>
      <div className="absolute right-0 top-[61px] flex flex-col gap-[1px] w-[13px]">
        {panes.map((c, i) => (
          <div key={i} className={`h-[23px] ${c} border border-[#222] border-r-0 flex items-center pl-[3px] overflow-hidden`}>
            <PaneIcon i={i} />
          </div>
        ))}
      </div>
      <div className="absolute left-0 top-[422px] w-[7px] h-[37px] bg-[#e4e6e9] flex flex-col justify-around items-center text-[6px] leading-none text-[#333]">
        <span>◀</span>
        <span>◀</span>
        <span>◀</span>
      </div>
    </div>
  );
}

export default function App() {
  return (
    <div className={`w-[1903px] h-[976px] flex flex-col overflow-hidden ${font}`}>
      <TopBar />
      <Ribbon />
      <div className="flex-1 flex relative min-h-0">
        <TabStrip />
        <Sidebar />
        <Viewport />
      </div>
    </div>
  );
}
